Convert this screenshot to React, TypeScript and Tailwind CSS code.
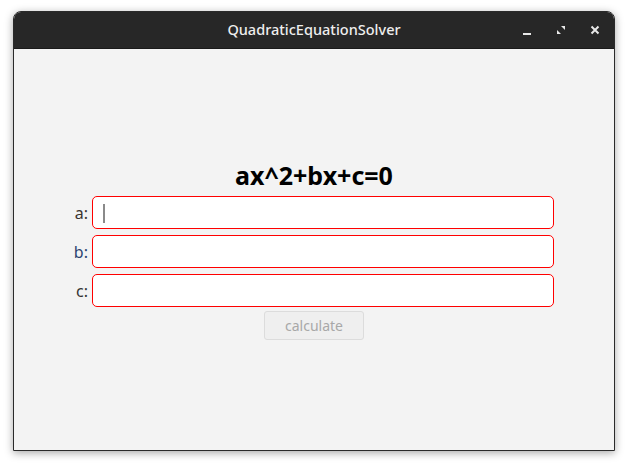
import { useState } from "react";

const fields = [
  { id: "a", label: "a:", color: "text-[#3a3330]" },
  { id: "b", label: "b:", color: "text-[#2c4470]" },
  { id: "c", label: "c:", color: "text-[#333]" },
];

export default function App() {
  const [values, setValues] = useState<Record<string, string>>({ a: "", b: "", c: "" });

  return (
    <div className="w-[628px] h-[466px] bg-white font-['Noto_Sans',sans-serif]">
      <div className="ml-[13px] pt-[11px]">
        <div className="w-[602px] h-[440px] flex flex-col rounded-t-[8px] border border-[#2a2a2a] shadow-[0_2px_8px_rgba(0,0,0,0.35)] overflow-hidden">
          {/* Title bar */}
          <div className="relative h-[37px] bg-[#272727] border-b border-[#1a1a1a] flex items-center justify-center">
            <span className="text-[14.5px] text-[#eeeeee] font-medium">QuadraticEquationSolver</span>
            <div className="absolute right-[12px] top-0 h-full flex items-center gap-[20px]">
              <svg width="14" height="14" viewBox="0 0 14 14">
                <rect x="3" y="10" width="8" height="2" fill="#e8e8e8" />
              </svg>
              <svg width="14" height="14" viewBox="0 0 14 14">
                <path d="M7 3 H11 V7 Z" fill="#e8e8e8" />
                <path d="M3 7 V11 H7 Z" fill="#e8e8e8" />
              </svg>
              <svg width="14" height="14" viewBox="0 0 14 14">
                <path d="M3.5 3.5 L10.5 10.5 M10.5 3.5 L3.5 10.5" stroke="#e8e8e8" strokeWidth="2" />
              </svg>
            </div>
          </div>

          {/* Content */}
          <div className="flex-1 bg-[#f3f3f3] flex flex-col items-center pt-[110px]">
            <h1 className="text-[25px] font-bold text-black leading-[32px]">ax^2+bx+c=0</h1>
            <div className="mt-[5px] flex flex-col gap-[6px] w-full pl-[59px]">
              {fields.map((f, i) => (
                <div key={f.id} className="flex items-center gap-[4px]">
                  <span className={`w-[15px] text-right text-[16px] ${f.color}`}>{f.label}</span>
                  <div className="relative w-[462px] h-[33px] bg-white border border-[#ff0000] rounded-[5px]">
                    {i === 0 && (
                      <div className="absolute left-[10px] top-[7px] w-[2px] h-[19px] bg-[#8a8a8a]" />
                    )}
                    <input
                      className="w-full h-full bg-transparent outline-none px-[10px] text-[15px]"
                      value={values[f.id]}
                      onChange={(e) => setValues({ ...values, [f.id]: e.target.value })}
                    />
                  </div>
                </div>
              ))}
            </div>
            <button className="mt-[4px] w-[100px] h-[29px] bg-[#efefef] border border-[#dcdcdc] rounded-[3px] text-[14px] text-[#a8a8a8]">
              calculate
            </button>
          </div>
        </div>
      </div>
    </div>
  );
}
